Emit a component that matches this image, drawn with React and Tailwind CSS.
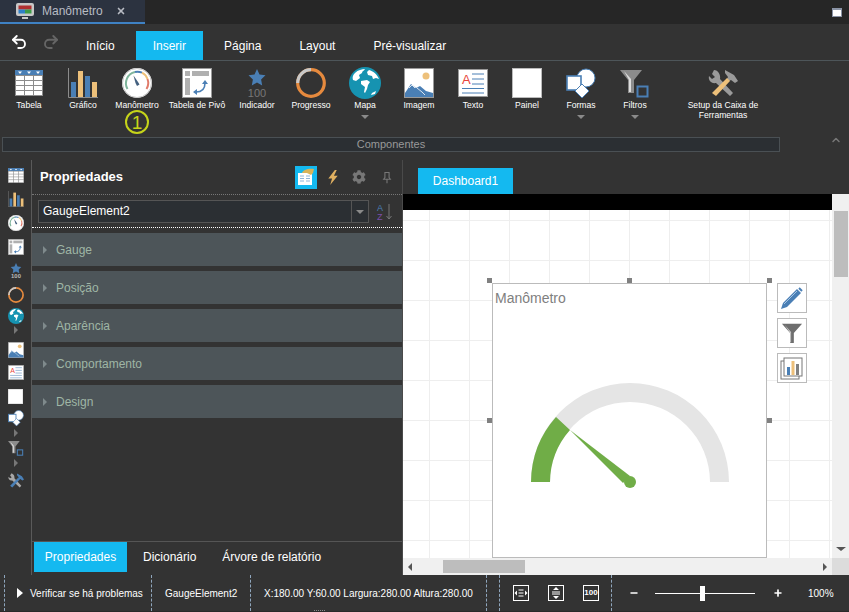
import React from 'react'
import { Undo2, Redo2, X, Plus, Minus, ChevronUp } from 'lucide-react'
import { FaCog } from 'react-icons/fa'

const BLUE = '#4a7fb5'
const TAN = '#edc07a'

function TableIcon({ className }) {
  return (
    <svg viewBox="0 0 28 26" className={className}>
      <rect width="28" height="26" fill="#8c8c8c" />
      <rect x="0" y="0" width="28" height="5" fill={BLUE} />
      <path d="M3 1.5h4l-2 2.5zM12 1.5h4l-2 2.5zM21 1.5h4l-2 2.5z" fill="#fff" />
      {[6, 11, 16, 21].map(y => (
        <g key={y}>
          <rect x="1" y={y} width="8" height="4" fill="#fff" />
          <rect x="10" y={y} width="8" height="4" fill="#fff" />
          <rect x="19" y={y} width="8" height="4" fill="#fff" />
        </g>
      ))}
    </svg>
  )
}

function ChartIcon({ className }) {
  return (
    <svg viewBox="0 0 30 30" className={className}>
      <path d="M.5 0v29.5H30" fill="none" stroke="#8c8c8c" />
      <rect x="3" y="14" width="5" height="15" fill={BLUE} />
      <rect x="10" y="3" width="5" height="26" fill={TAN} />
      <rect x="17" y="8" width="5" height="21" fill={BLUE} />
      <rect x="24" y="14" width="5" height="15" fill={TAN} />
    </svg>
  )
}

function GaugeIcon({ className }) {
  return (
    <svg viewBox="0 0 30 30" className={className}>
      <circle cx="15" cy="15" r="15" fill="#fff" />
      <circle cx="15" cy="15" r="14.5" fill="none" stroke="#c4c4c4" />
      <path d="M5.5 21A11.5 11.5 0 0 1 13 4" fill="none" stroke="#7fb59c" strokeWidth="2" />
      <path d="M13 4A11.5 11.5 0 0 1 20 4.7" fill="none" stroke="#4a7fb5" strokeWidth="2" />
      <path d="M20 4.7A11.5 11.5 0 0 1 25.5 11" fill="none" stroke={TAN} strokeWidth="2" />
      <path d="M25.5 11A11.5 11.5 0 0 1 24.5 21" fill="none" stroke="#e07a6a" strokeWidth="2" />
      <path d="M11.5 7.5l4.5 6.5 1.500 2.500-2.500 1.500-1.500-3z" fill="#44607f" />
    </svg>
  )
}

function PivotIcon({ className }) {
  return (
    <svg viewBox="0 0 30 30" className={className}>
      <rect x=".5" y=".5" width="29" height="29" fill="#fff" stroke="#9a9a9a" />
      <rect x="3" y="3" width="5" height="5" fill="#b0b0b0" />
      <rect x="10" y="3" width="17" height="5" fill="#b0b0b0" />
      <rect x="3" y="10" width="5" height="17" fill="#b0b0b0" />
      <path d="M14 24c6 0 9-3 9-9" fill="none" stroke={BLUE} strokeWidth="1.6" />
      <path d="M20 16l3-4 3 4zM15 21v6l-4-3z" fill={BLUE} />
    </svg>
  )
}

function StarIcon({ className, small }) {
  return (
    <svg viewBox="0 0 30 30" className={className}>
      {small ? (
        <path d="M15 0l3 6.5 7 1-5 4.8 1.200 7L15 16l-6.200 3.300 1.200-7-5-4.800 7-1z" fill={BLUE} />
      ) : (
        <path d="M15 1l2.500 5.500 6 .8-4.400 4.100 1.100 6L15 14.500l-5.200 2.900 1.100-6L6.500 7.300l6-.8z" fill={BLUE} />
      )}
      <text
        x="15"
        y="29"
        textAnchor="middle"
        fontFamily="Liberation Sans, sans-serif"
        fontSize="11"
        fontWeight={small ? 700 : 400}
        fill={small ? '#bbb' : '#777'}
      >
        100
      </text>
    </svg>
  )
}

function RingIcon({ className }) {
  return (
    <svg viewBox="0 0 30 30" className={className}>
      <circle cx="15" cy="15" r="13.3" fill="none" stroke="#e68a3e" strokeWidth="3.2" />
      <path d="M1.7 15A13.3 13.3 0 0 1 15 1.7" fill="none" stroke="#c8c8c8" strokeWidth="3.2" />
    </svg>
  )
}

function GlobeIcon({ className }) {
  return (
    <svg viewBox="0 0 32 32" className={className}>
      <circle cx="16" cy="16" r="16" fill="#1693b1" />
      <path d="M6 6c3-3 7-4 10-4-1 2-3 2-3 4l-3 2 1 3-4 3-3-1c-1-3 0-5 2-7z" fill="#fff" />
      <path d="M12 14l6-1 3 2-2 3-1 4-2 4-1-1 1-5-4-3z" fill="#fff" />
      <path d="M20 3c4 1 8 4 10 9l-3-1-3 1-1-3-4-1-1-3z" fill="#fff" />
      <path d="M23 26l4-2-1 3-4 1z" fill="#fff" />
    </svg>
  )
}

function ImageIcon({ className }) {
  return (
    <svg viewBox="0 0 30 30" className={className}>
      <rect x=".5" y=".5" width="29" height="29" fill="#fff" stroke="#9a9a9a" />
      <circle cx="22" cy="8" r="3.5" fill={TAN} />
      <path d="M1 25l6-9 5 4 4-2 6 5 7 2v4H1z" fill={BLUE} />
      <path d="M5 20l3-3 3 3M13 20l5 4 3 3" fill="none" stroke="#fff" strokeWidth=".8" />
    </svg>
  )
}

function TextIcon({ className }) {
  return (
    <svg viewBox="0 0 30 28" className={className}>
      <rect x=".5" y=".5" width="29" height="27" fill="#fff" stroke="#9a9a9a" />
      <text x="4" y="15" fontFamily="Liberation Sans, sans-serif" fontSize="13" fill="#e8453c">
        A
      </text>
      <path d="M14 5h12M14 10h12M14 15h12M4 19.5h22M4 24h22" stroke={BLUE} strokeWidth="1" />
    </svg>
  )
}

function PanelIcon({ className }) {
  return (
    <svg viewBox="0 0 30 30" className={className}>
      <rect width="30" height="30" fill="#fff" />
      <rect x=".5" y=".5" width="29" height="29" fill="none" stroke="#777" strokeDasharray="1 1" />
    </svg>
  )
}

function ShapesIcon({ className }) {
  return (
    <svg viewBox="0 0 30 30" className={className}>
      <circle cx="20" cy="10" r="9" fill="#fff" stroke={BLUE} />
      <rect x="1" y="8" width="14" height="14" fill="#fff" stroke={BLUE} strokeWidth="1.6" />
      <path d="M16 16l7 7-7 7-7-7z" fill="#fff" stroke={BLUE} />
    </svg>
  )
}

function FilterIcon({ className }) {
  return (
    <svg viewBox="0 0 30 30" className={className}>
      <path d="M0 2h22l-8 10v13H8V12z" fill="#8c8c8c" />
      <path d="M9 12v12h2V11L4 3z" fill="#ddd" />
      <rect x="17.5" y="18.5" width="10" height="10" fill="none" stroke={BLUE} strokeWidth="2" />
    </svg>
  )
}

function ToolsIcon({ className, hammer = '#9a9a9a', handle = TAN, wrench = '#9a9a9a' }) {
  return (
    <svg viewBox="0 0 30 28" className={className}>
      <path d="M6 1L4 5l3 3-3 2-3-3c-1 4 2 8 7 7l14 13 3-3L12 10c1-4-2-9-6-9z" fill={wrench} />
      <path d="M17 1l9 5 4 6-3 2-4-3-2 1-2-2 1-2-3-4z" fill={hammer} />
      <path d="M19 9l3 3L8 27l-4-3z" fill={handle} />
    </svg>
  )
}

function DropArrow() {
  return <div className="w-0 h-0 border-x-[4px] border-x-transparent border-t-[4px] border-t-[#8a8a8a]" />
}

const ribbonItems = [
  { label: 'Tabela', w: 'w-[54px]', icon: <TableIcon className="w-[28px] h-[26px]" /> },
  { label: 'Gráfico', w: 'w-[54px]', icon: <ChartIcon className="w-[30px] h-[30px]" /> },
  { label: 'Manômetro', w: 'w-[54px]', icon: <GaugeIcon className="w-[30px] h-[30px]" /> },
  { label: 'Tabela de Pivô', w: 'w-[66px]', icon: <PivotIcon className="w-[30px] h-[30px]" /> },
  { label: 'Indicador', w: 'w-[54px]', icon: <StarIcon className="w-[30px] h-[30px]" /> },
  { label: 'Progresso', w: 'w-[54px]', icon: <RingIcon className="w-[30px] h-[30px]" /> },
  { label: 'Mapa', w: 'w-[54px]', icon: <GlobeIcon className="w-[32px] h-[32px]" />, arrow: true },
  { label: 'Imagem', w: 'w-[54px]', icon: <ImageIcon className="w-[30px] h-[30px]" /> },
  { label: 'Texto', w: 'w-[54px]', icon: <TextIcon className="w-[30px] h-[28px]" /> },
  { label: 'Painel', w: 'w-[54px]', icon: <PanelIcon className="w-[30px] h-[30px]" /> },
  { label: 'Formas', w: 'w-[54px]', icon: <ShapesIcon className="w-[30px] h-[30px]" />, arrow: true },
  { label: 'Filtros', w: 'w-[54px]', icon: <FilterIcon className="w-[30px] h-[30px]" />, arrow: true },
  { label: 'Setup da Caixa de Ferramentas', w: 'w-[122px]', icon: <ToolsIcon className="w-[30px] h-[28px]" /> },
]

const stripItems = [
  { h: 'h-[24px]', icon: <TableIcon className="w-[16px] h-[15px]" /> },
  { h: 'h-[24px]', icon: <ChartIcon className="w-[16px] h-[16px]" /> },
  { h: 'h-[24px]', icon: <GaugeIcon className="w-[16px] h-[16px]" /> },
  { h: 'h-[23px]', icon: <PivotIcon className="w-[16px] h-[16px]" /> },
  { h: 'h-[26px]', icon: <StarIcon className="w-[16px] h-[16px]" small /> },
  { h: 'h-[22px]', icon: <RingIcon className="w-[16px] h-[16px]" /> },
  { h: 'h-[19px]', icon: <GlobeIcon className="w-[16px] h-[16px]" />, arrow: 'mb-[5px]' },
  { h: 'h-[22px]', icon: <ImageIcon className="w-[16px] h-[16px]" /> },
  { h: 'h-[23px]', icon: <TextIcon className="w-[16px] h-[15px]" /> },
  { h: 'h-[24px]', icon: <PanelIcon className="w-[15px] h-[15px]" /> },
  { h: 'h-[20px]', icon: <ShapesIcon className="w-[16px] h-[16px]" />, arrow: 'mb-[1px]' },
  { h: 'h-[20px]', icon: <FilterIcon className="w-[16px] h-[16px]" />, arrow: 'mb-[1px]' },
  {
    h: 'h-[24px]',
    icon: <ToolsIcon className="w-[16px] h-[15px]" hammer={BLUE} handle={BLUE} wrench="#a8a8a8" />,
  },
]

const groups = ['Gauge', 'Posição', 'Aparência', 'Comportamento', 'Design']

const handles = [
  'left-[84px] top-[68px]',
  'left-[224px] top-[68px]',
  'left-[364px] top-[68px]',
  'left-[84px] top-[208px]',
  'left-[364px] top-[208px]',
]

function Ribbon() {
  return (
    <div className="relative h-[76px] flex pl-[2px] pt-[6px] shrink-0">
      {ribbonItems.map(({ label, w, icon, arrow }) => (
        <div key={label} className={`${w} flex flex-col items-center shrink-0`}>
          <div className="h-[32px] flex items-center justify-center">{icon}</div>
          <div className="mt-[1px] w-[76px] shrink-0 text-[8.6px] leading-[10px] text-center text-white">{label}</div>
          {arrow && (
            <div className="mt-[5px]">
              <DropArrow />
            </div>
          )}
        </div>
      ))}
      {/* numbered callout over the ribbon */}
      <div className="absolute left-[125px] top-[49px] w-[24px] h-[24px] rounded-full border-2 border-[#c6d41a] flex items-center justify-center text-[#c6d41a] text-[19px] leading-none">
        1
      </div>
    </div>
  )
}

function PropertiesPanel() {
  return (
    <div className="w-[371px] shrink-0 flex flex-col border-r border-[#4a4a4a]">
      <div className="h-[34px] flex items-center pl-[8px] shrink-0">
        <span className="text-[13px] font-bold text-white">Propriedades</span>
        <div className="ml-auto flex items-center">
          <div className="w-[22px] h-[23px] bg-[#14b9f0] flex items-center justify-center">
            <svg viewBox="0 0 18 18" className="w-[18px] h-[18px]">
              <rect x="1" y="5" width="14" height="12" fill="#fff" />
              <path d="M3 8h4M3 10.5h4M3 13h4M9 8h4M9 10.5h4M9 13h4" stroke="#8fb5d8" />
              <path d="M5 5c1-3 6-5 12-4l-1 4-2 2-4-2z" fill="#d8b45a" />
            </svg>
          </div>
          <svg viewBox="0 0 12 16" className="ml-[10px] w-[12px] h-[15px]">
            <path d="M8 0L1 9h4l-2 7 8-10H7l3-6z" fill="#e0b060" />
          </svg>
          <FaCog className="ml-[13px] w-[14px] h-[14px] text-[#777]" />
          <svg viewBox="0 0 12 14" className="ml-[16px] mr-[10px] w-[10px] h-[13px]">
            <path d="M3.5 1h5v6L10 9H2l1.5-2zM6 9v5" fill="none" stroke="#777" strokeWidth="1.3" />
          </svg>
        </div>
      </div>
      <div className="border-t border-dotted border-[#777] h-[6px] shrink-0" />
      <div className="flex items-center ml-[6px] shrink-0">
        <div className="w-[331px] h-[23px] flex border border-[#555] bg-[#2b2f33]">
          <div className="flex-1 pl-[4px] text-[12px] leading-[21px] text-white">GaugeElement2</div>
          <div className="w-[17px] border-l border-[#555] flex items-center justify-center">
            <DropArrow />
          </div>
        </div>
        <svg viewBox="0 0 18 18" className="ml-[7px] w-[18px] h-[18px]">
          <text x="1" y="8" fontFamily="Liberation Sans, sans-serif" fontSize="9" fill="#4a7fb5">
            A
          </text>
          <text x="1" y="17" fontFamily="Liberation Sans, sans-serif" fontSize="9" fill="#7a4fa8">
            Z
          </text>
          <path d="M13 1v15M10.5 13l2.5 3 2.5-3" fill="none" stroke="#777" />
        </svg>
      </div>
      <div className="mt-[4px] border-t border-dotted border-white h-[6px] shrink-0" />
      <div className="flex flex-col gap-[5px]">
        {groups.map(name => (
          <div key={name} className="h-[33px] bg-[#4d5559] flex items-center pl-[11px]">
            <div className="w-0 h-0 border-y-[4px] border-y-transparent border-l-[4px] border-l-[#7f8a8c]" />
            <span className="ml-[9px] text-[12px] text-[#9fb5a5]">{name}</span>
          </div>
        ))}
      </div>
      <div className="mt-auto h-[34px] border-t border-[#555] flex pl-[2px] shrink-0">
        <div className="h-[30px] w-[93px] bg-[#14b9f0] flex items-center justify-center text-[12px] text-white">
          Propriedades
        </div>
        <div className="h-[30px] ml-[16px] flex items-center text-[12px] text-white">Dicionário</div>
        <div className="h-[30px] ml-[26px] flex items-center text-[12px] text-white">Árvore de relatório</div>
      </div>
    </div>
  )
}

function GaugeChart() {
  return (
    <svg viewBox="0 0 200 110" className="block w-[200px] h-[110px] ml-[37px] mt-[73px]">
      <path d="M1 102A99 99 0 0 1 199 102H180A80 80 0 0 0 20 102Z" fill="#e5e5e5" />
      <path d="M1 102A99 99 0 0 1 26 37L40 50A80 80 0 0 0 20 102Z" fill="#70ad47" />
      <path d="M40 50L100 96L93 103Z" fill="#70ad47" />
      <circle cx="100" cy="102" r="6" fill="#70ad47" />
    </svg>
  )
}

function Designer() {
  return (
    <div className="flex-1 min-w-0 flex flex-col">
      <div className="h-[34px] pl-[15px] pt-[8px] shrink-0">
        <div className="w-[95px] h-[26px] bg-[#14b9f0] flex items-center justify-center text-[12px] text-white">
          Dashboard1
        </div>
      </div>
      <div className="flex-1 min-h-0 flex">
        <div className="flex-1 min-w-0 flex flex-col">
          <div className="h-[16px] bg-black shrink-0" />
          <div className="relative flex-1 min-h-0 overflow-hidden bg-white bg-[linear-gradient(to_right,#eeeeee_1px,transparent_1px),linear-gradient(to_bottom,#eeeeee_1px,transparent_1px)] bg-[size:40px_40px] bg-[position:26px_10px]">
            <div className="absolute left-[89px] top-[73px] w-[275px] h-[275px] bg-white border border-[#bbbbbb]">
              <div className="pl-[2px] pt-[5px] text-[14px] leading-[18px] text-[#808080]">Manômetro</div>
              <GaugeChart />
            </div>
            {handles.map(pos => (
              <div key={pos} className={`absolute ${pos} w-[5px] h-[5px] bg-[#808080]`} />
            ))}
            <div className="absolute left-[374px] top-[73px] flex flex-col gap-[5px]">
              <div className="w-[30px] h-[30px] border border-[#bbb] bg-white flex items-center justify-center">
                <svg viewBox="0 0 24 24" className="w-[24px] h-[24px]">
                  <path d="M1 23l2-6L17 3l4 4L7 21z" fill={BLUE} />
                  <path d="M19 2l3 3" stroke={BLUE} strokeWidth="2" />
                  <path d="M4 18L17 5" stroke="#a8c6e4" />
                </svg>
              </div>
              <div className="w-[30px] h-[30px] border border-[#bbb] bg-white flex items-center justify-center">
                <svg viewBox="0 0 24 24" className="w-[22px] h-[22px]">
                  <path d="M1 2h22l-9 10v11h-4V12z" fill="#6e6e6e" />
                  <path d="M10 12v10h1V11L4 3z" fill="#c8c8c8" />
                </svg>
              </div>
              <div className="w-[30px] h-[30px] border border-[#bbb] bg-white flex items-center justify-center">
                <svg viewBox="0 0 24 24" className="w-[24px] h-[24px]">
                  <rect x="1" y="5" width="18" height="18" fill="#fff" stroke="#777" />
                  <rect x="4" y="2" width="18" height="18" fill="#fff" stroke="#777" />
                  <rect x="7" y="11" width="3" height="8" fill={BLUE} />
                  <rect x="11.5" y="5" width="3" height="14" fill={TAN} />
                  <rect x="16" y="8" width="3" height="11" fill="#808080" />
                </svg>
              </div>
            </div>
          </div>
          <div className="h-[17px] bg-[#f0f0f0] flex items-center shrink-0">
            <div className="w-0 h-0 ml-[5px] border-y-[4px] border-y-transparent border-r-[4px] border-r-[#555]" />
            <div className="ml-[31px] w-[82px] h-[13px] bg-[#bdbdbd]" />
            <div className="ml-auto mr-[5px] w-0 h-0 border-y-[4px] border-y-transparent border-l-[4px] border-l-[#555]" />
          </div>
        </div>
        <div className="w-[17px] bg-[#f0f0f0] flex flex-col items-center shrink-0">
          <div className="h-[17px] w-full" />
          <div className="w-[14px] h-[66px] bg-[#bdbdbd]" />
          <div className="mt-auto mb-[7px] w-0 h-0 border-x-[5px] border-x-transparent border-t-[4px] border-t-[#555]" />
          <div className="h-[17px] w-full bg-[#dcdcdc]" />
        </div>
      </div>
    </div>
  )
}

function StatusBar() {
  const sep = 'border-l border-dashed border-[#8fa6bd] h-full flex items-center shrink-0'
  return (
    <div className="relative h-[37px] shrink-0 pl-[4px] flex text-[10px] text-white border-b border-[#2a2a2a]">
      <div className={`${sep} w-[147px]`}>
        <div className="ml-[12px] w-0 h-0 border-y-[5px] border-y-transparent border-l-[6px] border-l-white" />
        <span className="ml-[7px]">Verificar se há problemas</span>
      </div>
      <div className={`${sep} w-[99px] pl-[13px]`}>GaugeElement2</div>
      <div className={`${sep} w-[236px] pl-[13px]`}>X:180.00 Y:60.00 Largura:280.00 Altura:280.00</div>
      <div className={`${sep} w-[13px]`} />
      <div className={`${sep} w-[112px] pl-[13px] gap-[19px]`}>
        <svg viewBox="0 0 16 16" className="w-[16px] h-[16px]">
          <rect x=".5" y=".5" width="15" height="15" fill="none" stroke="#fff" />
          <path d="M5.5 5h5M5.5 8h5M5.5 11h5" stroke="#fff" />
          <path d="M1.5 8L4 5.5v5zM14.5 8L12 5.5v5z" fill="#fff" />
        </svg>
        <svg viewBox="0 0 16 16" className="w-[16px] h-[16px]">
          <rect x=".5" y=".5" width="15" height="15" fill="none" stroke="#fff" />
          <path d="M4 7h8M4 9h8" stroke="#fff" />
          <path d="M8 2l3 3H5zM8 14l3-3H5z" fill="#fff" />
        </svg>
        <div className="w-[16px] h-[16px] border border-white flex items-center justify-center text-[8px] font-bold leading-none">
          100
        </div>
      </div>
      <div className={`${sep} flex-1`}>
        <Minus className="ml-[17px] w-[10px] h-[10px]" strokeWidth={4} />
        <div className="relative ml-[16px] w-[100px] h-[1px] bg-white">
          <div className="absolute left-[45px] -top-[7px] w-[5px] h-[15px] bg-white" />
        </div>
        <Plus className="ml-[18px] w-[10px] h-[10px]" strokeWidth={4} />
        <span className="ml-[25px]">100%</span>
      </div>
      {/* resize grip on the bottom edge */}
      <div className="absolute left-[314px] bottom-0 w-[11px] border-b border-dotted border-[#8a8a8a]" />
    </div>
  )
}

export default function App() {
  return (
    <div className="w-[849px] h-[612px] overflow-hidden bg-[#333333] flex flex-col font-['Liberation_Sans',Arial,sans-serif]">
      {/* Title bar */}
      <div className="h-[24px] bg-[#262626] flex shrink-0">
        <div className="w-[145px] h-[24px] bg-[#2c3340] border-b-2 border-[#3f82c4] flex items-center pl-[16px]">
          <svg viewBox="0 0 18 17" className="w-[18px] h-[17px]">
            <rect x="0" y="0" width="18" height="13" rx="2" fill="#c8c8c8" />
            <rect x="2.5" y="2.5" width="13" height="4" fill="#b03030" />
            <rect x="2.5" y="6.5" width="6.5" height="4" fill="#2f80c8" />
            <rect x="9" y="6.5" width="6.5" height="4" fill="#3d9b48" />
            <path d="M6 14h6v2H6z" fill="#c8c8c8" />
          </svg>
          <span className="ml-[8px] text-[12px] text-[#b8bcc4]">Manômetro</span>
          <X className="ml-[13px] w-[10px] h-[10px] text-[#b8bcc4]" strokeWidth={4} />
        </div>
        <div className="ml-auto mr-[7px] mt-[8px] w-[10px] h-[9px] bg-white border border-[#8a93a5] border-t-[2px]" />
      </div>

      {/* Ribbon tabs */}
      <div className="h-[37px] border-b border-[#4d5559] flex shrink-0 text-[12px] text-white">
        <div className="w-[69px] flex items-center pl-[10px]">
          <Undo2 className="w-[18px] h-[18px] text-white" strokeWidth={2.5} />
          <Redo2 className="ml-[14px] w-[18px] h-[18px] text-[#666]" strokeWidth={2.5} />
        </div>
        <div className="flex gap-[4px] items-end">
          <div className="h-[29px] px-[17px] flex items-center">Início</div>
          <div className="h-[29px] px-[17px] flex items-center bg-[#14b9f0]">Inserir</div>
          <div className="h-[29px] px-[17px] flex items-center">Página</div>
          <div className="h-[29px] px-[17px] flex items-center">Layout</div>
          <div className="h-[29px] px-[17px] flex items-center">Pré-visualizar</div>
        </div>
      </div>

      <Ribbon />

      {/* Ribbon group caption */}
      <div className="h-[15px] flex shrink-0">
        <div className="ml-[2px] w-[778px] border border-[#4a5054] bg-[#2b2f33] flex items-center justify-center text-[11px] text-[#999999]">
          Componentes
        </div>
        <ChevronUp className="ml-[50px] -mt-[3px] w-[12px] h-[12px] text-[#777]" strokeWidth={3} />
      </div>

      {/* Main area */}
      <div className="mt-[8px] flex-1 min-h-0 flex">
        <div className="w-[32px] shrink-0 border-r border-[#5a5a5a] pt-[3px] flex flex-col items-center">
          {stripItems.map(({ h, icon, arrow }, i) => (
            <React.Fragment key={i}>
              <div className={`${h} flex items-center justify-center`}>{icon}</div>
              {arrow && (
                <div className={`h-[9px] ${arrow} flex items-center justify-center`}>
                  <div className="w-0 h-0 border-y-[4px] border-y-transparent border-l-[4px] border-l-[#777]" />
                </div>
              )}
            </React.Fragment>
          ))}
        </div>
        <PropertiesPanel />
        <Designer />
      </div>

      <StatusBar />
    </div>
  )
}
